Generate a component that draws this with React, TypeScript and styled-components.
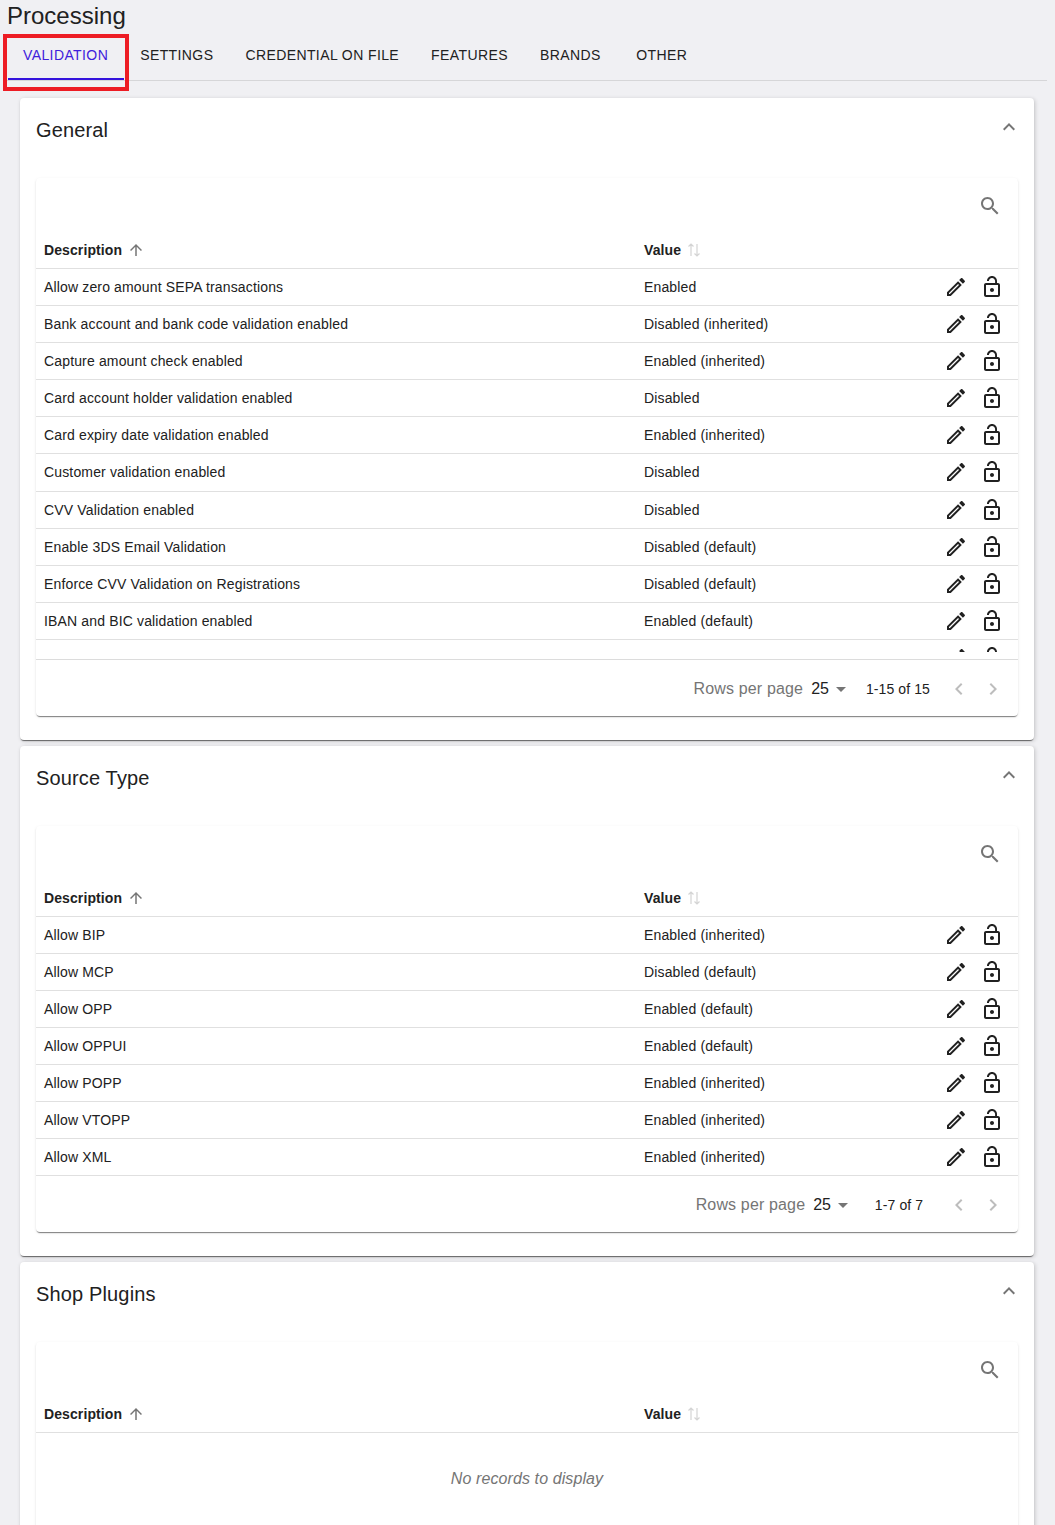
import React from "react";
import styled, { createGlobalStyle } from "styled-components";

const GlobalStyle = createGlobalStyle`
  html, body {
    margin: 0;
    padding: 0;
    background: #f0f0f3;
    font-family: "Liberation Sans", Arial, sans-serif;
    color: rgba(0, 0, 0, 0.87);
  }
`;

const Page = styled.div`
  height: 100vh;
  overflow: hidden;
  padding: 0 8px 0 7px;
  box-sizing: border-box;
  background: #f0f0f3;
`;

const PageTitle = styled.h1`
  margin: 0;
  height: 34px;
  font-size: 24px;
  line-height: 32px;
  font-weight: 400;
  color: #212121;
`;

const TabBar = styled.div`
  position: relative;
  display: flex;
  height: 46px;
  border-bottom: 1px solid #d6d6d8;
  padding-left: 1px;
`;

const Tab = styled.div<{ $active?: boolean }>`
  display: flex;
  align-items: center;
  justify-content: center;
  min-width: 90px;
  height: 46px;
  padding: 0 16px 2px;
  box-sizing: border-box;
  font-size: 14px;
  letter-spacing: 0.4px;
  white-space: nowrap;
  text-transform: uppercase;
  color: ${(p) => (p.$active ? "#3f20dc" : "#212121")};
  border-bottom: 2px solid ${(p) => (p.$active ? "#3413dc" : "transparent")};

  &:first-child {
    padding-left: 15px;
  }
`;

const Highlight = styled.div`
  position: absolute;
  left: -4px;
  top: 0;
  width: 126px;
  height: 57px;
  box-sizing: border-box;
  border: 4px solid #ed1c24;
  pointer-events: none;
`;

const Sections = styled.div`
  display: flex;
  flex-direction: column;
  gap: 6px;
  margin: 17px 13px 0;
`;

const Section = styled.section`
  background: #fff;
  border-radius: 4px;
  padding: 0 16px 24px;
  box-shadow: 0 2px 1px -1px rgba(0, 0, 0, 0.45), 0 1px 1px 0 rgba(0, 0, 0, 0.14),
    1px 1px 4px 0 rgba(0, 0, 0, 0.18);
`;

const SectionHeader = styled.div`
  display: flex;
  align-items: center;
  justify-content: space-between;
  height: 64px;
  margin-bottom: 16px;
`;

const SectionTitle = styled.h2`
  margin: 0;
  font-size: 20px;
  font-weight: 400;
  letter-spacing: 0.15px;
  line-height: 64px;
  color: #212121;
`;

const CollapseIcon = styled.svg`
  width: 24px;
  height: 24px;
  fill: #757575;
  margin: -6px -3px 0 0;
`;

const TableCard = styled.div`
  background: #fff;
  border-radius: 4px;
  box-shadow: 0 2px 1px -1px rgba(0, 0, 0, 0.4), 0 1px 1px 0 rgba(0, 0, 0, 0.1),
    0 1px 3px 0 rgba(0, 0, 0, 0.1);
`;

const Toolbar = styled.div`
  display: flex;
  align-items: center;
  justify-content: flex-end;
  height: 54px;
  padding: 1px 16px 0 0;
  box-sizing: border-box;
`;

const GreyIcon = styled.svg<{ $size?: number }>`
  width: ${(p) => p.$size ?? 24}px;
  height: ${(p) => p.$size ?? 24}px;
  fill: #757575;
  flex: none;
`;

const HeaderRow = styled.div`
  display: grid;
  grid-template-columns: 600px 1fr;
  align-items: center;
  height: 36px;
  padding: 0 8px;
  border-bottom: 1px solid #e0e0e0;
`;

const HeaderCell = styled.div`
  display: flex;
  align-items: center;
  gap: 5px;
  font-size: 14px;
  font-weight: 700;
  letter-spacing: 0.1px;
  color: #212121;
`;

const UnsortedIcon = styled.svg`
  width: 14px;
  height: 16px;
  margin-left: 1px;
  stroke: #d4d4d4;
  fill: none;
  stroke-width: 1.2;
  flex: none;
`;

const ScrollBody = styled.div`
  height: 383px;
  overflow: hidden;
  margin-bottom: 7px;
`;

const Row = styled.div<{ $tall?: boolean }>`
  display: grid;
  grid-template-columns: 600px 1fr auto;
  align-items: center;
  height: ${(p) => (p.$tall ? 38 : 37)}px;
  box-sizing: border-box;
  padding: 0 14px ${(p) => (p.$tall ? 1 : 0)}px 8px;
  border-bottom: 1px solid #e0e0e0;
  font-size: 14px;
  letter-spacing: 0.15px;
  color: #212121;
`;

const RowActions = styled.div`
  display: flex;
  gap: 12px;
`;

const ActionIcon = styled.svg`
  width: 24px;
  height: 24px;
  fill: #212121;
`;

const Footer = styled.div<{ $ruled?: boolean }>`
  display: flex;
  align-items: center;
  justify-content: flex-end;
  height: ${(p) => (p.$ruled ? 57 : 56)}px;
  padding: 2px 8px 0 0;
  box-sizing: border-box;
  border-top: ${(p) => (p.$ruled ? "1px solid #dcdcdc" : "none")};
`;

const RowsLabel = styled.span`
  font-size: 16px;
  letter-spacing: 0.15px;
  color: #757575;
  margin-right: 8px;
`;

const RowsValue = styled.span`
  font-size: 16px;
  color: #212121;
`;

const Caret = styled.svg`
  width: 24px;
  height: 24px;
  fill: #757575;
  margin-right: 4px;
`;

const RangeText = styled.span`
  min-width: 80px;
  padding: 0 9px;
  margin-right: 3px;
  box-sizing: border-box;
  text-align: center;
  font-size: 14px;
  letter-spacing: 0.1px;
  white-space: nowrap;
  color: #212121;
`;

const PagerIcon = styled.svg`
  width: 24px;
  height: 24px;
  padding: 0 5px;
  fill: #bdbdbd;
  flex: none;
`;

const EmptyRow = styled.div`
  display: flex;
  align-items: center;
  justify-content: center;
  height: 150px;
  padding: 0 0 58px;
  box-sizing: border-box;
  font-size: 16px;
  font-style: italic;
  letter-spacing: 0.1px;
  color: #757575;
`;

const EditPath =
  "M14.06 9.02l.92.92L5.92 19H5v-.92l9.06-9.06M17.66 3c-.25 0-.51.1-.7.29l-1.83 1.83 3.75 3.75 1.83-1.83c.39-.39.39-1.02 0-1.41l-2.34-2.34c-.2-.2-.45-.29-.71-.29zm-3.6 3.19L3 17.25V21h3.75L17.81 9.94l-3.75-3.75z";
const LockOpenPath =
  "M12 17c1.1 0 2-.9 2-2s-.9-2-2-2-2 .9-2 2 .9 2 2 2zm6-9h-1V6c0-2.76-2.24-5-5-5S7 3.24 7 6h1.9c0-1.71 1.39-3.1 3.1-3.1 1.71 0 3.1 1.39 3.1 3.1v2H6c-1.1 0-2 .9-2 2v10c0 1.1.9 2 2 2h12c1.1 0 2-.9 2-2V10c0-1.1-.9-2-2-2zm0 12H6V10h12v10z";

const generalRows = [
  ["Allow zero amount SEPA transactions", "Enabled"],
  ["Bank account and bank code validation enabled", "Disabled (inherited)"],
  ["Capture amount check enabled", "Enabled (inherited)"],
  ["Card account holder validation enabled", "Disabled"],
  ["Card expiry date validation enabled", "Enabled (inherited)"],
  ["Customer validation enabled", "Disabled"],
  ["CVV Validation enabled", "Disabled"],
  ["Enable 3DS Email Validation", "Disabled (default)"],
  ["Enforce CVV Validation on Registrations", "Disabled (default)"],
  ["IBAN and BIC validation enabled", "Enabled (default)"],
  ["", ""],
];

const sourceRows = [
  ["Allow BIP", "Enabled (inherited)"],
  ["Allow MCP", "Disabled (default)"],
  ["Allow OPP", "Enabled (default)"],
  ["Allow OPPUI", "Enabled (default)"],
  ["Allow POPP", "Enabled (inherited)"],
  ["Allow VTOPP", "Enabled (inherited)"],
  ["Allow XML", "Enabled (inherited)"],
];

const TableHead = () => (
  <>
    <Toolbar>
      <GreyIcon viewBox="0 0 24 24">
        <path d="M15.5 14h-.79l-.28-.27C15.41 12.59 16 11.11 16 9.5 16 5.91 13.09 3 9.5 3S3 5.91 3 9.5 5.91 16 9.5 16c1.61 0 3.09-.59 4.23-1.57l.27.28v.79l5 4.99L20.49 19l-4.99-5zm-6 0C7.01 14 5 11.99 5 9.5S7.01 5 9.5 5 14 7.01 14 9.5 11.99 14 9.5 14z" />
      </GreyIcon>
    </Toolbar>
    <HeaderRow>
      <HeaderCell>
        Description
        <GreyIcon $size={18} viewBox="0 0 24 24">
          <path d="M4 12l1.41 1.41L11 7.83V20h2V7.83l5.58 5.59L20 12l-8-8-8 8z" />
        </GreyIcon>
      </HeaderCell>
      <HeaderCell>
        Value
        <UnsortedIcon viewBox="0 0 14 16">
          <path d="M4 14V2M1.5 4.5L4 2l2.5 2.5M10 2v12M7.5 11.5L10 14l2.5-2.5" />
        </UnsortedIcon>
      </HeaderCell>
    </HeaderRow>
  </>
);

const DataRow = ({ label, value, tall }: { label: string; value: string; tall?: boolean }) => (
  <Row $tall={tall}>
    <span>{label}</span>
    <span>{value}</span>
    <RowActions>
      <ActionIcon viewBox="0 0 24 24">
        <path d={EditPath} />
      </ActionIcon>
      <ActionIcon viewBox="0 0 24 24">
        <path d={LockOpenPath} />
      </ActionIcon>
    </RowActions>
  </Row>
);

const Pagination = ({ range, ruled }: { range: string; ruled?: boolean }) => (
  <Footer $ruled={ruled}>
    <RowsLabel>Rows per page</RowsLabel>
    <RowsValue>25</RowsValue>
    <Caret viewBox="0 0 24 24">
      <path d="M7 10l5 5 5-5z" />
    </Caret>
    <RangeText>{range}</RangeText>
    <PagerIcon viewBox="0 0 24 24">
      <path d="M15.41 7.41L14 6l-6 6 6 6 1.41-1.41L10.83 12z" />
    </PagerIcon>
    <PagerIcon viewBox="0 0 24 24">
      <path d="M10 6L8.59 7.41 13.17 12l-4.58 4.59L10 18l6-6z" />
    </PagerIcon>
  </Footer>
);

const SectionTop = ({ title }: { title: string }) => (
  <SectionHeader>
    <SectionTitle>{title}</SectionTitle>
    <CollapseIcon viewBox="0 0 24 24">
      <path d="M12 8l-6 6 1.41 1.41L12 10.83l4.59 4.58L18 14z" />
    </CollapseIcon>
  </SectionHeader>
);

const tabs = ["Validation", "Settings", "Credential on file", "Features", "Brands", "Other"];

const App: React.FC = () => (
  <Page>
    <GlobalStyle />
    <PageTitle>Processing</PageTitle>
    <TabBar>
      {tabs.map((t, i) => (
        <Tab key={t} $active={i === 0}>
          {t}
        </Tab>
      ))}
      <Highlight />
    </TabBar>
    <Sections>
      <Section>
        <SectionTop title="General" />
        <TableCard>
          <TableHead />
          <ScrollBody>
            {generalRows.map((r, i) => (
              <DataRow key={i} label={r[0]} value={r[1]} tall={i === 5} />
            ))}
          </ScrollBody>
          <Pagination range="1-15 of 15" ruled />
        </TableCard>
      </Section>
      <Section>
        <SectionTop title="Source Type" />
        <TableCard>
          <TableHead />
          {sourceRows.map((r) => (
            <DataRow key={r[0]} label={r[0]} value={r[1]} />
          ))}
          <Pagination range="1-7 of 7" />
        </TableCard>
      </Section>
      <Section>
        <SectionTop title="Shop Plugins" />
        <TableCard>
          <TableHead />
          <EmptyRow>No records to display</EmptyRow>
        </TableCard>
      </Section>
    </Sections>
  </Page>
);

export default App;
